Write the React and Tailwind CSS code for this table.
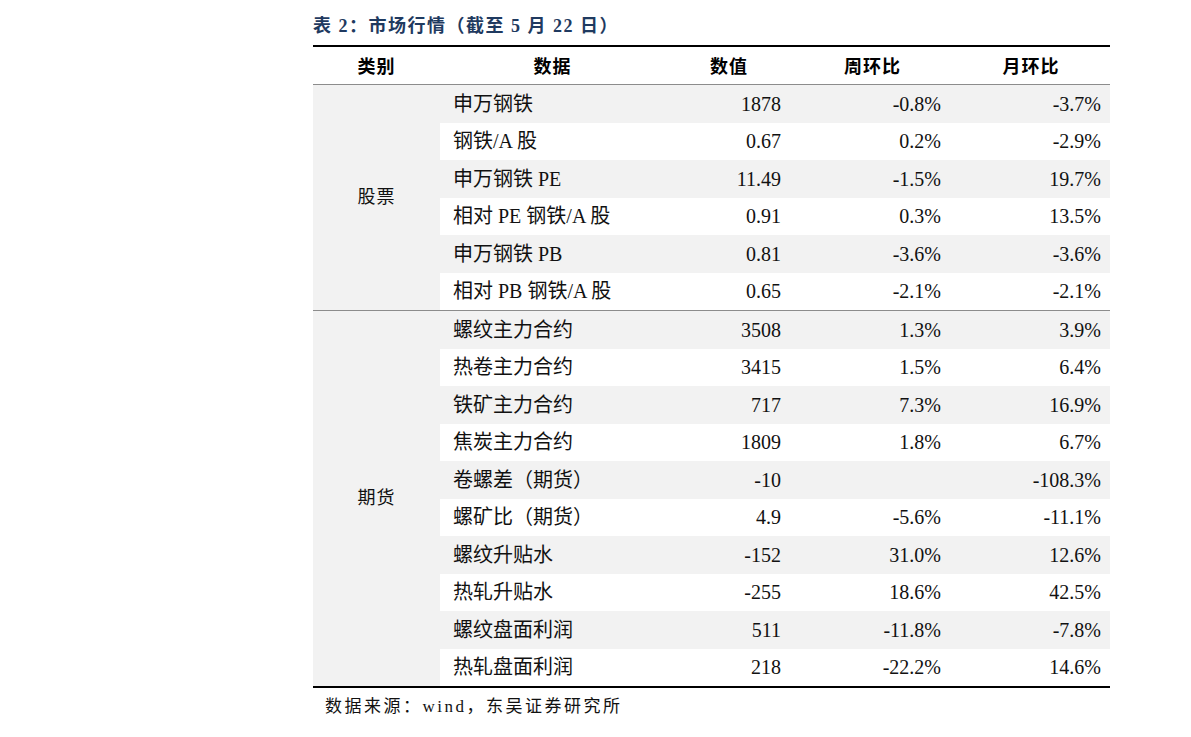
const stockRows = [
  ['申万钢铁', '1878', '-0.8%', '-3.7%'],
  ['钢铁/A 股', '0.67', '0.2%', '-2.9%'],
  ['申万钢铁 PE', '11.49', '-1.5%', '19.7%'],
  ['相对 PE 钢铁/A 股', '0.91', '0.3%', '13.5%'],
  ['申万钢铁 PB', '0.81', '-3.6%', '-3.6%'],
  ['相对 PB 钢铁/A 股', '0.65', '-2.1%', '-2.1%'],
]

const futureRows = [
  ['螺纹主力合约', '3508', '1.3%', '3.9%'],
  ['热卷主力合约', '3415', '1.5%', '6.4%'],
  ['铁矿主力合约', '717', '7.3%', '16.9%'],
  ['焦炭主力合约', '1809', '1.8%', '6.7%'],
  ['卷螺差（期货）', '-10', '', '-108.3%'],
  ['螺矿比（期货）', '4.9', '-5.6%', '-11.1%'],
  ['螺纹升贴水', '-152', '31.0%', '12.6%'],
  ['热轧升贴水', '-255', '18.6%', '42.5%'],
  ['螺纹盘面利润', '511', '-11.8%', '-7.8%'],
  ['热轧盘面利润', '218', '-22.2%', '14.6%'],
]

const serif = { fontFamily: '"Liberation Serif", "Noto Sans CJK SC", serif' }

function Section({ label, rows, divider }) {
  return (
    <div className={`flex ${divider ? 'border-t-[1.5px] border-[#8c8c8c]' : ''}`}>
      <div className="w-[127px] shrink-0 bg-[#f2f2f2] flex items-center justify-center text-[18px] tracking-[1px] text-[#111]">
        {label}
      </div>
      <div className="flex-1">
        {rows.map(([name, val, wk, mo], i) => (
          <div key={name} className={`flex h-[37.5px] items-center text-[20px] text-[#111] ${i % 2 === 0 ? 'bg-[#f2f2f2]' : 'bg-white'}`}>
            <div className="w-[225px] pl-[13px] whitespace-nowrap">{name}</div>
            <div className="w-[128px] pr-[12px] text-right">{val}</div>
            <div className="w-[159px] pr-[11px] text-right">{wk}</div>
            <div className="w-[158px] pr-[9px] text-right">{mo}</div>
          </div>
        ))}
      </div>
    </div>
  )
}

export default function App() {
  return (
    <div className="w-[1191px] h-[737px] bg-white pl-[313px] pt-[15px]" style={serif}>
      <div className="h-[22px] flex items-center text-[18px] font-bold tracking-[1.5px] text-[#1f3a60] whitespace-nowrap">
        表 2：市场行情（截至 5 月 22 日）
      </div>
      <div className="w-[797px] mt-[8px] border-t-2 border-b-2 border-black">
        <div className="flex h-[38px] items-center pt-[3px] font-bold text-[18px] tracking-[1px] text-black border-b-[1.5px] border-[#8c8c8c]">
          <div className="w-[127px] text-center">类别</div>
          <div className="w-[225px] text-center">数据</div>
          <div className="w-[128px] text-center">数值</div>
          <div className="w-[159px] text-center">周环比</div>
          <div className="w-[158px] text-center">月环比</div>
        </div>
        <Section label="股票" rows={stockRows} />
        <Section label="期货" rows={futureRows} divider />
      </div>
      <div className="pl-[12px] pt-[6px] text-[17px] tracking-[2.5px] text-[#111]">
        数据来源：wind，东吴证券研究所
      </div>
    </div>
  )
}
